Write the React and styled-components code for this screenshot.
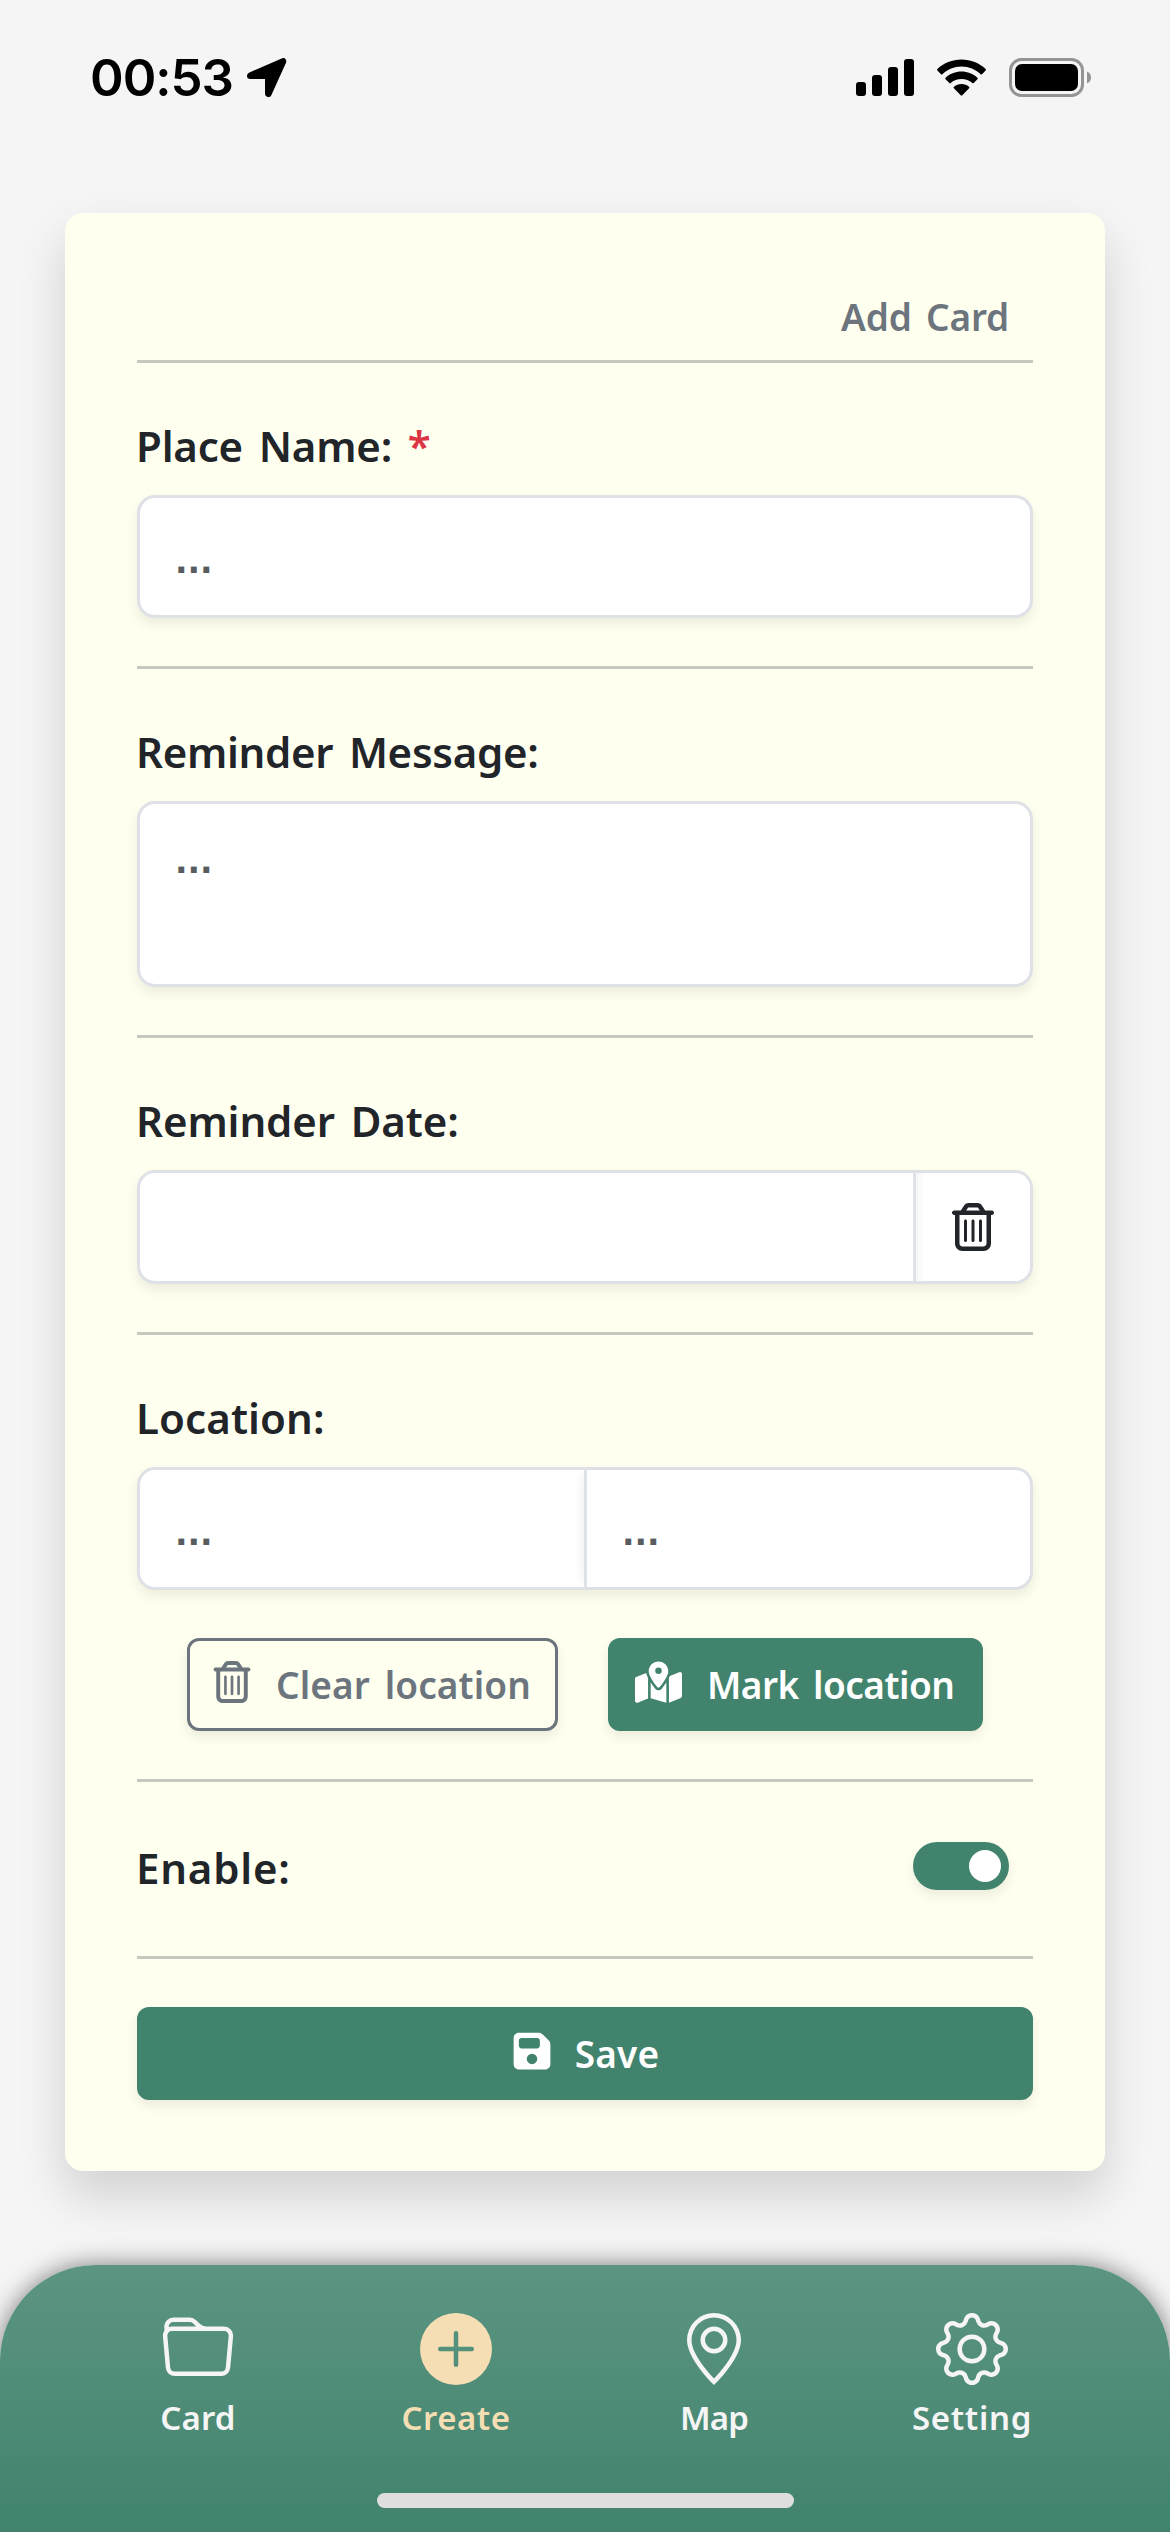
import React from "react";
import styled, { createGlobalStyle } from "styled-components";
import { FaRegTrashCan, FaMapLocationDot, FaFloppyDisk } from "react-icons/fa6";
import { BsFolder, BsGeoAlt, BsGear, BsPlusCircleFill } from "react-icons/bs";

const Global = createGlobalStyle`
  *, *::before, *::after { box-sizing: border-box; }
  body { margin: 0; background: #f5f5f5; }
`;

const Screen = styled.div`
  width: 1170px;
  height: 2532px;
  display: flex;
  flex-direction: column;
  overflow: hidden;
  background: #f5f5f5;
  color: #212529;
  font-family: "Noto Sans", "Open Sans", sans-serif;
  font-weight: 600;
`;

const StatusBar = styled.header`
  height: 213px;
  flex: none;
  display: flex;
  justify-content: space-between;
  align-items: flex-start;
  padding: 46px 78px 0 90px;
  color: #000;
`;

const Clock = styled.div`
  display: flex;
  align-items: center;
  height: 64px;
  font: 580 51px/64px Inter, sans-serif;
  letter-spacing: -1px;
`;

const Time = styled.span`
  width: 157px;
  white-space: nowrap;
`;

const StatusIcons = styled.div`
  display: flex;
  align-items: center;
  gap: 22px;
  height: 63px;
`;

const Card = styled.main`
  width: 1040px;
  height: 1958px;
  flex: none;
  margin: 0 auto;
  padding: 60px 72px 72px;
  border-radius: 18px;
  background: #fffff0;
  box-shadow: 0 24px 48px rgba(0, 0, 0, 0.15);
`;

const CardTitle = styled.div`
  height: 87px;
  padding: 12px 24px 0 0;
  text-align: right;
  color: #6c757d;
  font-size: 37px;
  line-height: 64px;
  letter-spacing: -0.2px;
  word-spacing: 5px;
`;

const Rule = styled.hr`
  height: 3px;
  margin: 0;
  border: 0;
  background: #c7c8bd;
`;

const Section = styled.section`
  height: ${(p) => p.$height}px;
  padding-top: 48px;
`;

const Label = styled.label`
  display: block;
  height: 84px;
  margin-left: -1px;
  font-size: 42px;
  line-height: 70px;
  letter-spacing: ${(p) => p.$spacing};
  word-spacing: 5px;
`;

const Required = styled.span`
  color: #dc3545;
`;

const FieldGroup = styled.div`
  display: flex;
  height: ${(p) => p.$height}px;
  border: 3px solid #dee2e6;
  border-radius: 18px;
  background: #fff;
  box-shadow: 0 6px 12px rgba(0, 0, 0, 0.075);
`;

const Field = styled.div`
  flex: ${(p) => (p.$width ? `0 0 ${p.$width}px` : 1)};
  padding: ${(p) => p.$top || 34}px 35px 0;
  color: #595c5f;
  font: 700 33px/60px "DejaVu Sans", sans-serif;
  & + & {
    border-left: 3px solid #dee2e6;
    box-shadow: -6px 0 10px -5px rgba(0, 0, 0, 0.075);
  }
`;

const FieldButton = styled.button`
  width: 117px;
  display: grid;
  place-items: center;
  padding: 0;
  border: 0;
  border-left: 3px solid #dee2e6;
  border-radius: 0 15px 15px 0;
  background: #fff;
  color: #212529;
  box-shadow: inset 8px 0 8px -6px rgba(0, 0, 0, 0.06);
`;

const Actions = styled.div`
  display: flex;
  justify-content: center;
  gap: 50px;
  margin-top: 48px;
`;

const Button = styled.button`
  width: ${(p) => p.$width};
  height: 93px;
  display: flex;
  align-items: center;
  justify-content: ${(p) => (p.$inset ? "flex-start" : "center")};
  gap: ${(p) => p.$gap}px;
  padding: 0 0 0 ${(p) => p.$inset || 0}px;
  border: 3px solid ${(p) => (p.$outline ? "#6c757d" : "#41836d")};
  border-radius: 12px;
  background: ${(p) => (p.$outline ? "transparent" : "#41836d")};
  color: ${(p) => (p.$outline ? "#6c757d" : "#fff")};
  box-shadow: 0 6px 12px rgba(0, 0, 0, 0.075);
  font: 600 37px/60px "Noto Sans", sans-serif;
  letter-spacing: ${(p) => p.$spacing};
  word-spacing: 5px;
  white-space: nowrap;
  & svg { flex: none; margin-bottom: 5px; }
`;

const EnableRow = styled.section`
  height: 174px;
  display: flex;
  align-items: flex-start;
  justify-content: space-between;
  padding: 51px 24px 0 0;
`;

const Switch = styled.div`
  width: 96px;
  height: 48px;
  display: flex;
  justify-content: flex-end;
  align-items: center;
  margin-top: 9px;
  padding: 8px;
  border-radius: 24px;
  background: #41836d;
  box-shadow: 0 6px 12px rgba(0, 0, 0, 0.075);
`;

const Knob = styled.span`
  width: 32px;
  height: 32px;
  border-radius: 50%;
  background: #fff;
`;

const SaveArea = styled.div`
  padding-top: 48px;
`;

const TabBar = styled.nav`
  flex: none;
  height: 267px;
  margin-top: 94px;
  display: flex;
  flex-direction: column;
  align-items: center;
  border-radius: 96px 96px 0 0;
  background: linear-gradient(#5c9582, #41836d);
  box-shadow: 0 0 24px rgba(0, 0, 0, 0.5);
`;

const Tabs = styled.div`
  width: 1032px;
  height: 228px;
  display: grid;
  grid-template-columns: repeat(4, 1fr);
  padding-top: 48px;
`;

const Tab = styled.a`
  display: flex;
  flex-direction: column;
  align-items: center;
  gap: 8px;
  color: ${(p) => (p.$active ? "#f5deb3" : "#f5f5f5")};
  font-size: 33px;
  line-height: 50px;
  letter-spacing: ${(p) => p.$spacing};
`;

const HomeIndicator = styled.div`
  width: 417px;
  height: 15px;
  border-radius: 8px;
  background: #dedede;
`;

function LocationArrow() {
  return (
    <svg width="40" height="40" viewBox="0 0 40 40">
      <path
        d="M3.300 17.700 36 3.400 21.300 35.800V17.700Z"
        fill="currentColor"
        stroke="currentColor"
        strokeWidth="6.600"
        strokeLinejoin="round"
      />
    </svg>
  );
}

function Signal() {
  return (
    <svg width="58" height="37" viewBox="0 0 58 37" fill="currentColor">
      <rect x="0" y="23" width="10" height="14" rx="3" />
      <rect x="16" y="16" width="10" height="21" rx="3" />
      <rect x="32" y="8" width="10" height="29" rx="3" />
      <rect x="48" y="0" width="10" height="37" rx="3" />
    </svg>
  );
}

function Wifi() {
  return (
    <svg width="51" height="37" viewBox="0 0 51 37" fill="currentColor">
      <path d="M25.500 7.600C32.900 7.600 39.600 10.500 44.600 15.200 45 15.600 45.600 15.600 46 15.200L49.600 11.500C50.100 11 50.100 10.500 49.600 10 43.300 4 34.800.5 25.500.5S7.700 4 1.400 10C.9 10.500.9 11 1.400 11.500L5 15.200C5.400 15.600 6 15.600 6.400 15.200 11.400 10.500 18.100 7.600 25.500 7.600Z" />
      <path d="M25.500 19.900C29.600 19.900 33.400 21.400 36.300 24 36.700 24.400 37.300 24.400 37.700 24L41.400 20.300C41.900 19.800 41.900 19.200 41.400 18.700 37.200 14.800 31.600 12.500 25.500 12.500S13.800 14.800 9.600 18.700C9.100 19.200 9.100 19.800 9.600 20.300L13.300 24C13.700 24.400 14.300 24.400 14.700 24 17.600 21.400 21.400 19.900 25.500 19.900Z" />
      <path d="M33.100 29.300C33.600 28.800 33.600 28.200 33 27.700 31 26 28.400 25 25.500 25S20 26 18 27.700C17.400 28.200 17.400 28.800 17.900 29.300L24.700 36.300C25.200 36.800 25.800 36.800 26.300 36.300Z" />
    </svg>
  );
}

function Battery() {
  return (
    <svg width="83" height="39" viewBox="0 0 83 39">
      <rect x="1.500" y="1.500" width="72" height="36" rx="11" fill="none" stroke="#949494" strokeWidth="3" />
      <rect x="6" y="6" width="63" height="27" rx="7" fill="#000" />
      <path d="M78 13.500C80.500 14.500 82 16.800 82 19.500S80.500 24.500 78 25.500Z" fill="#949494" />
    </svg>
  );
}

export default function App() {
  return (
    <Screen>
      <Global />
      <StatusBar>
        <Clock>
          <Time>00:53</Time>
          <LocationArrow />
        </Clock>
        <StatusIcons>
          <Signal />
          <Wifi />
          <Battery />
        </StatusIcons>
      </StatusBar>

      <Card>
        <CardTitle>Add Card</CardTitle>
        <Rule />
        <Section $height={303}>
          <Label $spacing="-0.2px">
            Place Name: <Required>*</Required>
          </Label>
          <FieldGroup $height={123}>
            <Field>...</Field>
          </FieldGroup>
        </Section>
        <Rule />
        <Section $height={366}>
          <Label $spacing="-0.3px">Reminder Message:</Label>
          <FieldGroup $height={186}>
            <Field $top={28}>...</Field>
          </FieldGroup>
        </Section>
        <Rule />
        <Section $height={294}>
          <Label $spacing="-0.1px">Reminder Date:</Label>
          <FieldGroup $height={114}>
            <Field />
            <FieldButton aria-label="Clear date">
              <FaRegTrashCan size={48} />
            </FieldButton>
          </FieldGroup>
        </Section>
        <Rule />
        <Section $height={444}>
          <Label $spacing="0.1px">Location:</Label>
          <FieldGroup $height={123}>
            <Field $width={444}>...</Field>
            <Field>...</Field>
          </FieldGroup>
          <Actions>
            <Button $outline $width="371px" $inset={21} $gap={23} $spacing="0.1px">
              <FaRegTrashCan size={42} />
              Clear location
            </Button>
            <Button $width="375px" $inset={24} $gap={25} $spacing="-0.5px">
              <FaMapLocationDot size={47} />
              Mark location
            </Button>
          </Actions>
        </Section>
        <Rule />
        <EnableRow>
          <Label $spacing="0.8px">Enable:</Label>
          <Switch>
            <Knob />
          </Switch>
        </EnableRow>
        <Rule />
        <SaveArea>
          <Button $width="100%" $gap={22} $spacing="0.2px">
            <FaFloppyDisk size={42} />
            Save
          </Button>
        </SaveArea>
      </Card>

      <TabBar>
        <Tabs>
          <Tab $spacing="0.2px"><BsFolder size={72} />Card</Tab>
          <Tab $active $spacing="0.5px"><BsPlusCircleFill size={72} />Create</Tab>
          <Tab $spacing="-0.8px"><BsGeoAlt size={72} />Map</Tab>
          <Tab $spacing="0.7px"><BsGear size={72} />Setting</Tab>
        </Tabs>
        <HomeIndicator />
      </TabBar>
    </Screen>
  );
}
